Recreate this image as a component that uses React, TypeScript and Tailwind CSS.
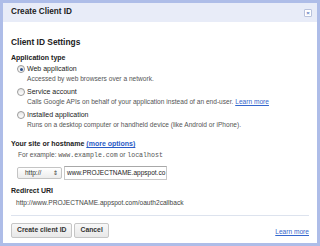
const Radio = ({ checked }: { checked?: boolean }) => (
  <span className="flex h-[8px] w-[8px] shrink-0 items-center justify-center rounded-full border border-[#9a9a9a] bg-gradient-to-b from-[#e6e6e6] to-white">
    {checked && <span className="h-[3px] w-[3px] rounded-full bg-[#2b4f8a]" />}
  </span>
);

const options = [
  {
    label: 'Web application',
    desc: 'Accessed by web browsers over a network.',
    checked: true,
  },
  {
    label: 'Service account',
    desc: 'Calls Google APIs on behalf of your application instead of an end-user.',
    link: true,
  },
  {
    label: 'Installed application',
    desc: 'Runs on a desktop computer or handheld device (like Android or iPhone).',
  },
];

export default function App() {
  return (
    <div
      className="flex h-[246px] w-[320px] flex-col overflow-hidden border-[3px] border-[#aebde8] bg-white text-[#222]"
      style={{ fontFamily: '"Liberation Sans", Arial, sans-serif' }}
    >
      {/* Header */}
      <div className="flex h-[19px] shrink-0 items-center justify-between bg-[#e8ecf8] pl-[8px] pr-[5px]">
        <span className="text-[8.2px] font-bold text-[#222]">Create Client ID</span>
        <span className="flex h-[8px] w-[8px] items-center justify-center rounded-[1px] border border-[#b8c2dc] bg-white text-[6px] leading-none font-bold text-[#5a78c0]">
          ×
        </span>
      </div>

      {/* Body */}
      <div className="flex flex-1 flex-col px-[8px]">
        <div className="mt-[14px] text-[8.4px] leading-[12px] font-bold">Client ID Settings</div>

        <div className="mt-[5px] text-[7px] leading-[10px] font-bold">Application type</div>

        <div className="mt-[1px] flex flex-col gap-[3px] pl-[6px]">
          {options.map((o) => (
            <div key={o.label} className="flex flex-col">
              <div className="flex h-[10px] items-center gap-[2px]">
                <Radio checked={o.checked} />
                <span className="text-[7px] leading-[10px] text-[#222]">{o.label}</span>
              </div>
              <div className="pl-[10px] text-[6.6px] leading-[10px] text-[#555]">
                {o.desc}
                {o.link && (
                  <>
                    {' '}
                    <span className="text-[#3366cc] underline">Learn more</span>
                  </>
                )}
              </div>
            </div>
          ))}
        </div>

        <div className="mt-[9px] text-[7px] leading-[10px] font-bold">
          Your site or hostname{' '}
          <span className="text-[#2a5bc6] underline">(more options)</span>
        </div>
        <div className="mt-[1px] pl-[7px] text-[6.6px] leading-[10px] text-[#555]">
          For example:{' '}
          <span style={{ fontFamily: '"Liberation Mono", monospace' }}>www.example.com</span> or{' '}
          <span style={{ fontFamily: '"Liberation Mono", monospace' }}>localhost</span>
        </div>

        <div className="mt-[5px] flex items-center gap-[2px] pl-[6px]">
          <div className="flex h-[12px] w-[45px] items-center justify-between rounded-[2px] border border-[#c4c4c4] bg-gradient-to-b from-white to-[#ececec] pr-[3px] pl-[7px] text-[6.5px] text-[#333]">
            <span>http://</span>
            <span className="text-[6px] leading-none">⇕</span>
          </div>
          <div className="flex h-[14px] w-[103px] items-center overflow-hidden border border-[#c8c8c8] border-t-[#a8a8a8] pl-[2px] text-[6.5px] whitespace-nowrap text-[#222]">
            www.PROJECTNAME.appspot.co
          </div>
        </div>

        <div className="mt-[6px] text-[7px] leading-[10px] font-bold">Redirect URI</div>
        <div className="mt-[2px] pl-[5px] text-[6.6px] leading-[10px] text-[#444]">
          http://www.PROJECTNAME.appspot.com/oauth2callback
        </div>

        <div className="mt-[7px] h-px bg-[#dde3ee]" />

        <div className="mt-[7px] flex items-center justify-between">
          <div className="flex gap-[2px]">
            <button className="h-[15px] rounded-[2px] border border-[#c6c6c6] bg-gradient-to-b from-[#f8f8f8] to-[#e8e8e8] px-[5px] text-[6.8px] font-bold text-[#333]">
              Create client ID
            </button>
            <button className="h-[15px] rounded-[2px] border border-[#c6c6c6] bg-gradient-to-b from-[#f8f8f8] to-[#e8e8e8] px-[5px] text-[6.8px] font-bold text-[#333]">
              Cancel
            </button>
          </div>
          <span className="mt-[3px] text-[6.6px] text-[#3366cc] underline">Learn more</span>
        </div>
      </div>
    </div>
  );
}
